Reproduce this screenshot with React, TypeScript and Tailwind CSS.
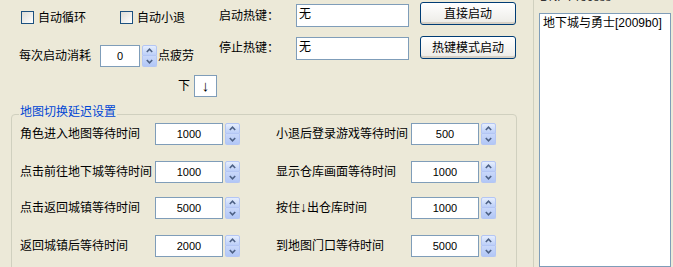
import React from 'react';

const Check = ({ label, className = '' }: { label: string; className?: string }) => (
  <div className={`flex items-center ${className}`}>
    <div className="w-[13px] h-[13px] border border-[#1c5180] bg-linear-to-br from-[#dcdcd6] to-white" />
    <span className="ml-[4px] leading-[16px]">{label}</span>
  </div>
);

const Arrow = ({ up }: { up?: boolean }) => (
  <svg width="7" height="5" viewBox="0 0 7 5">
    <polyline
      points={up ? '0.8,4 3.5,1.2 6.2,4' : '0.8,1 3.5,3.8 6.2,1'}
      fill="none"
      stroke="#4d6185"
      strokeWidth="1.6"
    />
  </svg>
);

const Spin = ({ className = '' }: { className?: string }) => (
  <div className={`flex flex-col w-[15px] h-[22px] ${className}`}>
    <div className="h-[11px] flex items-center justify-center rounded-t-[2px] border border-[#b4c6f4] bg-linear-to-b from-[#e6eefd] to-[#bccff8]">
      <Arrow up />
    </div>
    <div className="h-[11px] flex items-center justify-center rounded-b-[2px] border border-t-0 border-[#b4c6f4] bg-linear-to-b from-[#c9d8fa] to-[#b2c7f6]">
      <Arrow />
    </div>
  </div>
);

const NumBox = ({ value, width }: { value: string; width: string }) => (
  <div className={`${width} h-[22px] bg-white border border-[#7f9db9] flex items-center justify-center text-[11px]`}>
    {value}
  </div>
);

const Field = ({ label, value }: { label: React.ReactNode; value: string }) => (
  <div className="flex items-center w-[220px] h-[22px]">
    <span className="w-[135px] whitespace-nowrap leading-[16px]">{label}</span>
    <NumBox value={value} width="w-[68px]" />
    <Spin className="ml-[2px]" />
  </div>
);

const XpButton = ({ label, className = '' }: { label: string; className?: string }) => (
  <button className={`w-[96px] h-[23px] rounded-[3px] border border-[#003c74] bg-linear-to-b from-white to-[#ecebe6] shadow-[inset_0_-2px_0_#d6d0c5,inset_0_1px_0_#fff] flex items-center justify-center leading-[16px] ${className}`}>
    {label}
  </button>
);

const rows: [React.ReactNode, string, React.ReactNode, string][] = [
  ['角色进入地图等待时间', '1000', '小退后登录游戏等待时间', '500'],
  ['点击前往地下城等待时间', '1000', '显示仓库画面等待时间', '1000'],
  [
    '点击返回城镇等待时间',
    '5000',
    <>
      按住<span className="text-[14px] leading-[14px]">↓</span>出仓库时间
    </>,
    '1000',
  ],
  ['返回城镇后等待时间', '2000', '到地图门口等待时间', '5000'],
];
const rowMargins = ['mt-[8px]', 'mt-[16px]', 'mt-[14px]', 'mt-[16px]'];

export default function App() {
  return (
    <div className="w-[673px] h-[267px] overflow-hidden bg-[#ece9d8] flex text-[12px] text-black font-['Liberation_Sans','Noto_Sans_CJK_SC',sans-serif]">
      <div className="w-[517px] flex flex-col">
        <div className="flex h-[97px]">
          <div className="w-[219px] flex flex-col">
            <div className="flex items-center h-[13px] mt-[11px] pl-[21px]">
              <Check label="自动循环" className="w-[99px]" />
              <Check label="自动小退" />
            </div>
            <div className="flex items-center mt-[21px] pl-[19px] h-[22px]">
              <span className="leading-[16px]">每次启动消耗</span>
              <div className="ml-[9px]">
                <NumBox value="0" width="w-[40px]" />
              </div>
              <Spin className="ml-[2px]" />
              <span className="ml-[1px] leading-[16px]">点疲劳</span>
            </div>
            <div className="flex items-center justify-end mt-[8px] pr-[2px] h-[22px]">
              <span className="leading-[16px]">下</span>
              <div className="ml-[4px] w-[23px] h-[22px] bg-white border border-[#7f9db9] flex items-center justify-center text-[15px] leading-[16px]">
                ↓
              </div>
            </div>
          </div>
          <div className="flex flex-col">
            <div className="flex items-start h-[30px]">
              <span className="w-[77px] mt-[8px] leading-[16px]">启动热键：</span>
              <div className="w-[113px] h-[23px] mt-[4px] bg-white border border-[#7f9db9] pl-[2px] pt-[1px] leading-[16px]">无</div>
              <XpButton label="直接启动" className="ml-[11px] mt-[2px]" />
            </div>
            <div className="flex items-start h-[31px]">
              <span className="w-[77px] mt-[10px] leading-[16px]">停止热键：</span>
              <div className="w-[113px] h-[23px] mt-[7px] bg-white border border-[#7f9db9] pl-[2px] pt-[1px] leading-[16px]">无</div>
              <XpButton label="热键模式启动" className="ml-[11px] mt-[6px]" />
            </div>
          </div>
        </div>

        <div className="relative ml-[11px] mt-[17px] w-[506px] border border-[#d0d0bf] rounded-[4px] pl-[8px] pb-[20px]">
          <span className="absolute left-[7px] -top-[11px] px-[1px] bg-[#ece9d8] text-[#0046d5] leading-[16px]">
            地图切换延迟设置
          </span>
          {rows.map((r, i) => (
            <div key={i} className={`flex gap-[36px] ${rowMargins[i]}`}>
              <Field label={r[0]} value={r[1]} />
              <Field label={r[2]} value={r[3]} />
            </div>
          ))}
        </div>
      </div>

      <div className="ml-[16px] flex-1 border-l border-[#d0d0bf] pl-[5px] flex flex-col">
        <div className="h-[13px]">
          <span className="block -mt-[9px] leading-[13px] text-[#333] ml-[1px]">DNF Process</span>
        </div>
        <div className="w-[132px] flex-1 bg-white border border-[#7f9db9] pl-[3px] pt-[1px] leading-[16px] whitespace-nowrap">
          地下城与勇士[2009b0]
        </div>
      </div>
    </div>
  );
}
